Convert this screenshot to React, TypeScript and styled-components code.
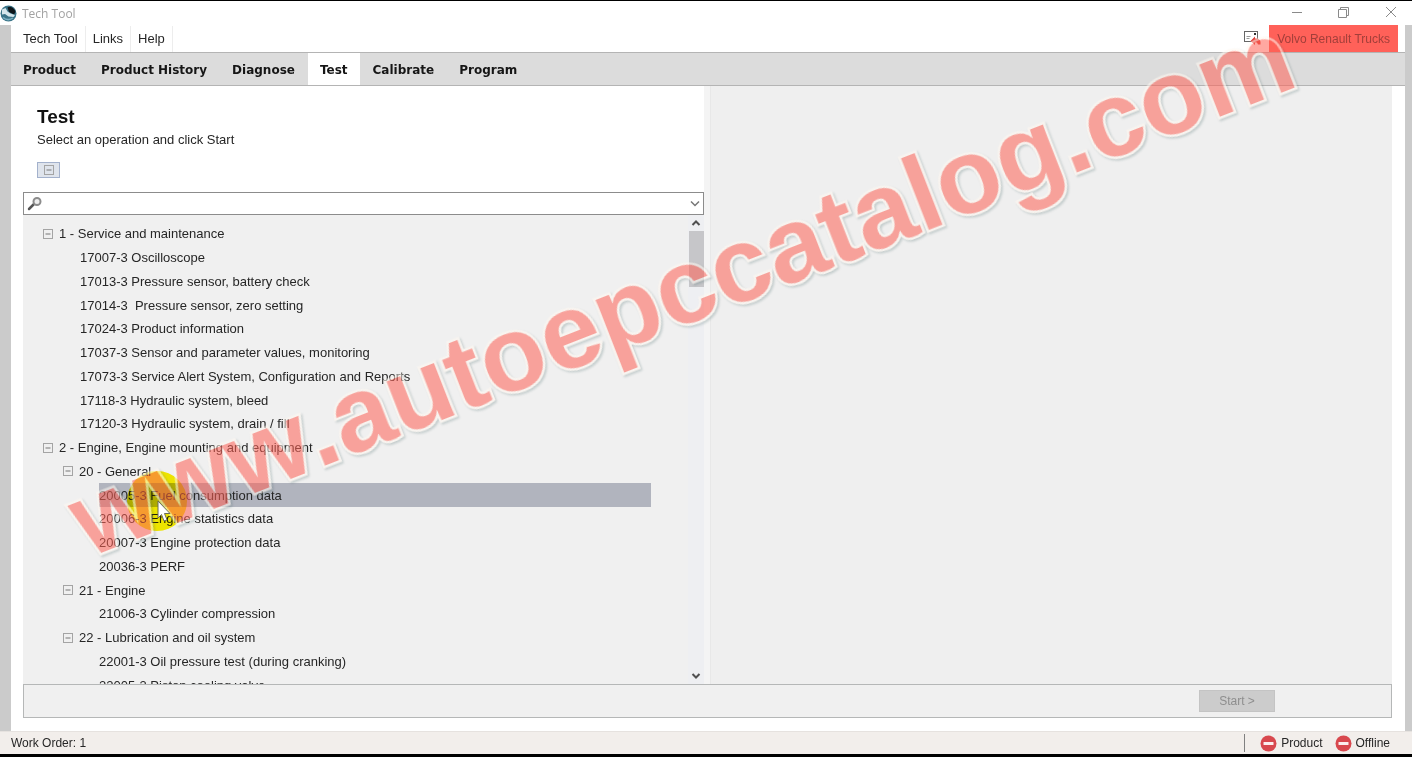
import React from "react";
import styled, { createGlobalStyle } from "styled-components";

const Global = createGlobalStyle`
  *, *::before, *::after { box-sizing: border-box; }
  body { margin: 0; background: #000; font-family: "Liberation Sans", Arial, sans-serif; font-size: 13px; color: #262626; }
  button, input { font: inherit; color: inherit; }
`;

const Window = styled.div`
  position: relative;
  display: flex;
  flex-direction: column;
  height: 100vh;
  min-height: 480px;
  overflow: hidden;
  background: #fff;
  border-top: 1px solid #000;
  border-bottom: 3px solid #000;
`;

const TitleBar = styled.header`
  display: flex;
  align-items: center;
  gap: 5px;
  height: 24px;
  flex: none;
  padding-right: 14px;
  color: #a2a2a2;
`;

const WindowTitle = styled.h1`
  margin: 0;
  font-family: "Open Sans", sans-serif;
  font-size: 12px;
  font-weight: 400;
  flex: 1;
`;

const WindowButtons = styled.div`
  display: flex;
  gap: 32px;
`;

const IconButton = styled.button`
  display: flex;
  align-items: center;
  justify-content: center;
  border: 0;
  padding: 0;
  background: transparent;
`;

const Frame = styled.div`
  display: flex;
  flex-direction: column;
  flex: 1;
  min-height: 0;
  border-left: 11px solid #cbcbcb;
  border-right: 7px solid #cbcbcb;
`;

const MenuBar = styled.nav`
  display: flex;
  align-items: center;
  height: 27px;
  flex: none;
  padding: 0 7px 0 5px;
`;

const MenuItem = styled.button`
  height: 26px;
  padding: 0 7px;
  border: 0;
  border-right: 1px solid #ededed;
  background: transparent;
  white-space: nowrap;
`;

const Spacer = styled.div`
  flex: 1;
`;

const Brand = styled.div`
  display: flex;
  align-items: center;
  height: 27px;
  margin-left: 8px;
  padding: 0 8px;
  background: #ff6159;
  color: #a23f3a;
  font-size: 12px;
`;

const TabBar = styled.nav`
  display: flex;
  column-gap: 1px;
  height: 34px;
  flex: none;
  background: #dcdcdc;
  border-top: 1px solid #b4b4b4;
  border-bottom: 1px solid #b4b4b4;
`;

const Tab = styled.button<{ $active?: boolean }>`
  padding: 2px 12px 0;
  border: 0;
  background: ${(p) => (p.$active ? "#fff" : "transparent")};
  color: #161616;
  font-family: "DejaVu Sans", sans-serif;
  font-size: 12px;
  font-weight: 700;
  white-space: nowrap;
`;

const Workspace = styled.main`
  display: flex;
  flex-direction: column;
  flex: 1;
  min-height: 0;
  padding: 0 13px 13px 0;
`;

const Columns = styled.div`
  display: grid;
  grid-template-columns: 693fr 682fr;
  column-gap: 6px;
  flex: 1;
  min-height: 0;
  background: #f4f4f4;
`;

const OperationPanel = styled.section`
  display: flex;
  flex-direction: column;
  min-height: 0;
  padding-left: 12px;
  background: #fff;
`;

const DetailPanel = styled.section`
  background: #efefef;
  border-left: 1px solid #e8e8e8;
`;

const PanelHead = styled.div`
  padding: 20px 14px 14px 14px;
`;

const PanelTitle = styled.h2`
  margin: 0;
  color: #111;
  font-size: 19px;
  line-height: 22px;
`;

const Hint = styled.p`
  margin: 4px 0 14px;
  line-height: 16px;
`;

const CollapseAll = styled(IconButton)`
  width: 23px;
  height: 16px;
  border: 1px solid #a3b1cc;
  background: #dfe4ec;
`;

const SearchBox = styled.label`
  display: flex;
  align-items: center;
  height: 23px;
  flex: none;
  padding: 0 3px;
  border: 1px solid #8c8c8c;
  background: #fff;
`;

const SearchInput = styled.input`
  flex: 1;
  min-width: 0;
  height: 19px;
  border: 0;
  outline: 0;
  background: transparent;
`;

const TreeArea = styled.div`
  display: flex;
  flex: 1;
  min-height: 0;
  background: #f0f0f0;
  overflow: hidden;
`;

const Tree = styled.ul`
  display: flex;
  flex-direction: column;
  flex: 1;
  margin: 7px 37px -13px 0;
  padding: 0;
  list-style: none;
`;

const Row = styled.li<{ $indent: number }>`
  display: flex;
  align-items: stretch;
  flex: 1 0 0;
  min-height: 20px;
  padding-left: ${(p) => p.$indent}px;
`;

const Toggle = styled(IconButton)`
  width: 10px;
  margin-right: 6px;
`;

const RowLabel = styled.button<{ $selected?: boolean }>`
  flex: 1;
  padding: 0;
  border: 0;
  background: ${(p) => (p.$selected ? "#b1b4be" : "transparent")};
  text-align: left;
  white-space: pre;
`;

const Scrollbar = styled.div`
  display: flex;
  flex-direction: column;
  align-items: center;
  width: 16px;
  background: #eeeff2;
`;

const ScrollButton = styled(IconButton)`
  width: 16px;
  height: 16px;
  color: #505050;
`;

const ScrollThumb = styled.div`
  width: 15px;
  height: 56px;
  background: #c6c6c9;
`;

const ActionBar = styled.footer`
  display: flex;
  align-items: center;
  justify-content: flex-end;
  height: 34px;
  flex: none;
  margin-left: 12px;
  padding-right: 116px;
  border: 1px solid #b5b7b7;
  background: #f0f0f0;
`;

const StartButton = styled.button`
  width: 76px;
  height: 22px;
  padding: 0;
  border: 1px solid #c4c4c4;
  background: #cccccc;
  color: #8e8e8e;
  font-size: 12px;
`;

const StatusBar = styled.footer`
  display: flex;
  align-items: center;
  height: 23px;
  flex: none;
  padding: 0 22px 0 11px;
  background: #f2eeeb;
  border-top: 1px solid #e6e2df;
  font-size: 12px;
`;

const StatusGroup = styled.div`
  display: flex;
  align-items: center;
  gap: 12px;
  height: 18px;
  padding-left: 15px;
  border-left: 1px solid #808080;
`;

const StatusItem = styled.span`
  display: flex;
  align-items: center;
  gap: 4px;
`;

const Watermark = styled.div`
  position: absolute;
  left: 88px;
  top: 467px;
  font-size: 106px;
  line-height: 106px;
  font-weight: 700;
  font-kerning: none;
  white-space: nowrap;
  pointer-events: none;
  color: #ff6256;
  -webkit-text-stroke: 5px #fff8f0;
  paint-order: stroke fill;
  opacity: 0.55;
  filter: drop-shadow(1px 2px 1px rgba(40, 80, 80, 0.4));
  transform: rotate(-21.3deg);
  transform-origin: 0 90px;
`;

const ClickHalo = styled.div`
  position: absolute;
  left: 127px;
  top: 470px;
  width: 60px;
  height: 60px;
  border-radius: 50%;
  background: #fbf200;
  mix-blend-mode: multiply;
  pointer-events: none;
`;

const Pointer = styled.svg`
  position: absolute;
  left: 157px;
  top: 499px;
  pointer-events: none;
`;

const MinusBox = () => (
  <svg width="10" height="10" viewBox="0 0 10 10" fill="none" stroke="#a4a4a4" aria-hidden>
    <rect x="0.5" y="0.5" width="9" height="9" />
    <path d="M2.5 5h5" stroke="#777" />
  </svg>
);

const Chevron = ({ up }: { up?: boolean }) => (
  <svg width="10" height="8" viewBox="0 0 10 8" fill="none" stroke="currentColor" strokeWidth="2" aria-hidden>
    <path d={up ? "M1.5 6 5 2.5 8.5 6" : "M1.5 2 5 5.5 8.5 2"} />
  </svg>
);

const NoEntry = () => (
  <svg width="17" height="17" viewBox="0 0 17 17" aria-hidden>
    <circle cx="8.5" cy="8.5" r="8" fill="#d8484e" />
    <rect x="3.5" y="7" width="10" height="3" rx="0.5" fill="#fbeeee" />
  </svg>
);

type Node = { text: string; level: number; group?: boolean; selected?: boolean };

const nodes: Node[] = [
  { text: "1 - Service and maintenance", level: 0, group: true },
  { text: "17007-3 Oscilloscope", level: 1 },
  { text: "17013-3 Pressure sensor, battery check", level: 1 },
  { text: "17014-3  Pressure sensor, zero setting", level: 1 },
  { text: "17024-3 Product information", level: 1 },
  { text: "17037-3 Sensor and parameter values, monitoring", level: 1 },
  { text: "17073-3 Service Alert System, Configuration and Reports", level: 1 },
  { text: "17118-3 Hydraulic system, bleed", level: 1 },
  { text: "17120-3 Hydraulic system, drain / fill", level: 1 },
  { text: "2 - Engine, Engine mounting and equipment", level: 0, group: true },
  { text: "20 - General", level: 1, group: true },
  { text: "20005-3 Fuel consumption data", level: 2, selected: true },
  { text: "20006-3 Engine statistics data", level: 2 },
  { text: "20007-3 Engine protection data", level: 2 },
  { text: "20036-3 PERF", level: 2 },
  { text: "21 - Engine", level: 1, group: true },
  { text: "21006-3 Cylinder compression", level: 2 },
  { text: "22 - Lubrication and oil system", level: 1, group: true },
  { text: "22001-3 Oil pressure test (during cranking)", level: 2 },
  { text: "22005-3 Piston cooling valve", level: 2 },
];

const indentOf = (n: Node) => (n.group ? 20 + n.level * 20 : 37 + n.level * 20 - (n.level - 1));

const tabs = ["Product", "Product History", "Diagnose", "Test", "Calibrate", "Program"];

export default function App() {
  return (
    <>
      <Global />
      <Window>
        <TitleBar>
          <svg width="17" height="17" viewBox="0 0 17 17" aria-hidden>
            <circle cx="8.5" cy="8.5" r="8" fill="#3a7488" />
            <path d="M7.5 2.5C10 .5 14.5 3 15.5 7l-1.5 2.5L9 7z" fill="#0e161b" />
            <path d="M2 4.5 5.5 3l2 3.5 3 2 4.5 1.5-1.5 2-5-.5L5 9 2 9.5z" fill="#d5e6ec" />
            <path d="M3 12.5c3 2.5 7 2.5 10 .5" fill="none" stroke="#7fb2c4" strokeWidth="1.5" />
          </svg>
          <WindowTitle>Tech Tool</WindowTitle>
          <WindowButtons>
            <IconButton aria-label="Minimize">
              <svg width="16" height="14" viewBox="0 0 16 14" stroke="#8a8a8a"><path d="M2 6.5h10" /></svg>
            </IconButton>
            <IconButton aria-label="Restore">
              <svg width="14" height="14" viewBox="0 0 14 14" fill="none" stroke="#8a8a8a">
                <path d="M.5 3.5h8v8h-8zM2.5 3.5v-2h8v8h-2" />
              </svg>
            </IconButton>
            <IconButton aria-label="Close">
              <svg width="14" height="14" viewBox="0 0 14 14" stroke="#8a8a8a"><path d="M2 1l10 10M12 1 2 11" /></svg>
            </IconButton>
          </WindowButtons>
        </TitleBar>

        <Frame>
          <MenuBar>
            <MenuItem>Tech Tool</MenuItem>
            <MenuItem>Links</MenuItem>
            <MenuItem>Help</MenuItem>
            <Spacer />
            <IconButton aria-label="Messages">
              <svg width="18" height="15" viewBox="0 0 18 15" fill="none">
                <rect x="1.5" y="0.5" width="13" height="10" fill="#fff" stroke="#666" />
                <path d="M3.5 5.5h4M3.5 7.5h3" stroke="#999" />
                <rect x="11" y="2" width="2" height="2" fill="#333" />
                <path d="M7.5 10 12 5.5v2c3.5-.5 5.5 1.5 5.5 3.5v2.5H15l-1-2h-2V14z" fill="#e23a33" />
              </svg>
            </IconButton>
            <Brand>Volvo Renault Trucks</Brand>
          </MenuBar>

          <TabBar>
            {tabs.map((t) => (
              <Tab key={t} $active={t === "Test"}>{t}</Tab>
            ))}
          </TabBar>

          <Workspace>
            <Columns>
              <OperationPanel>
                <PanelHead>
                  <PanelTitle>Test</PanelTitle>
                  <Hint>Select an operation and click Start</Hint>
                  <CollapseAll aria-label="Collapse all"><MinusBox /></CollapseAll>
                </PanelHead>
                <SearchBox>
                  <svg width="16" height="16" viewBox="0 0 16 16" fill="none" aria-hidden>
                    <path d="M2 13l5-5" stroke="#555" strokeWidth="2.5" strokeLinecap="round" />
                    <circle cx="10" cy="5.5" r="3.5" fill="#eee" stroke="#8c8c8c" strokeWidth="2" />
                  </svg>
                  <SearchInput aria-label="Search operations" />
                  <IconButton aria-label="Show recent searches">
                    <svg width="10" height="7" viewBox="0 0 10 7" fill="none" stroke="#777" strokeWidth="1.5"><path d="M1 1.5l4 4 4-4" /></svg>
                  </IconButton>
                </SearchBox>
                <TreeArea>
                  <Tree>
                    {nodes.map((n) => (
                      <Row key={n.text} $indent={indentOf(n)}>
                        {n.group && <Toggle aria-label={`Collapse ${n.text}`}><MinusBox /></Toggle>}
                        <RowLabel $selected={n.selected}>{n.text}</RowLabel>
                      </Row>
                    ))}
                  </Tree>
                  <Scrollbar>
                    <ScrollButton aria-label="Scroll up"><Chevron up /></ScrollButton>
                    <ScrollThumb />
                    <Spacer />
                    <ScrollButton aria-label="Scroll down"><Chevron /></ScrollButton>
                  </Scrollbar>
                </TreeArea>
              </OperationPanel>
              <DetailPanel />
            </Columns>
            <ActionBar>
              <StartButton disabled>Start &gt;</StartButton>
            </ActionBar>
          </Workspace>
        </Frame>

        <StatusBar>
          <span>Work Order: 1</span>
          <Spacer />
          <StatusGroup>
            <StatusItem><NoEntry />Product</StatusItem>
            <StatusItem><NoEntry />Offline</StatusItem>
          </StatusGroup>
        </StatusBar>

        <ClickHalo />
        <Watermark>www.autoepccatalog.com</Watermark>
        <Pointer width="14" height="22" viewBox="0 0 14 22" aria-hidden>
          <path d="M1 1v17l3.5-3.5L7 21l3-1.2-2.5-6.3H13z" fill="#fff" stroke="#6a6a5a" />
        </Pointer>
      </Window>
    </>
  );
}
